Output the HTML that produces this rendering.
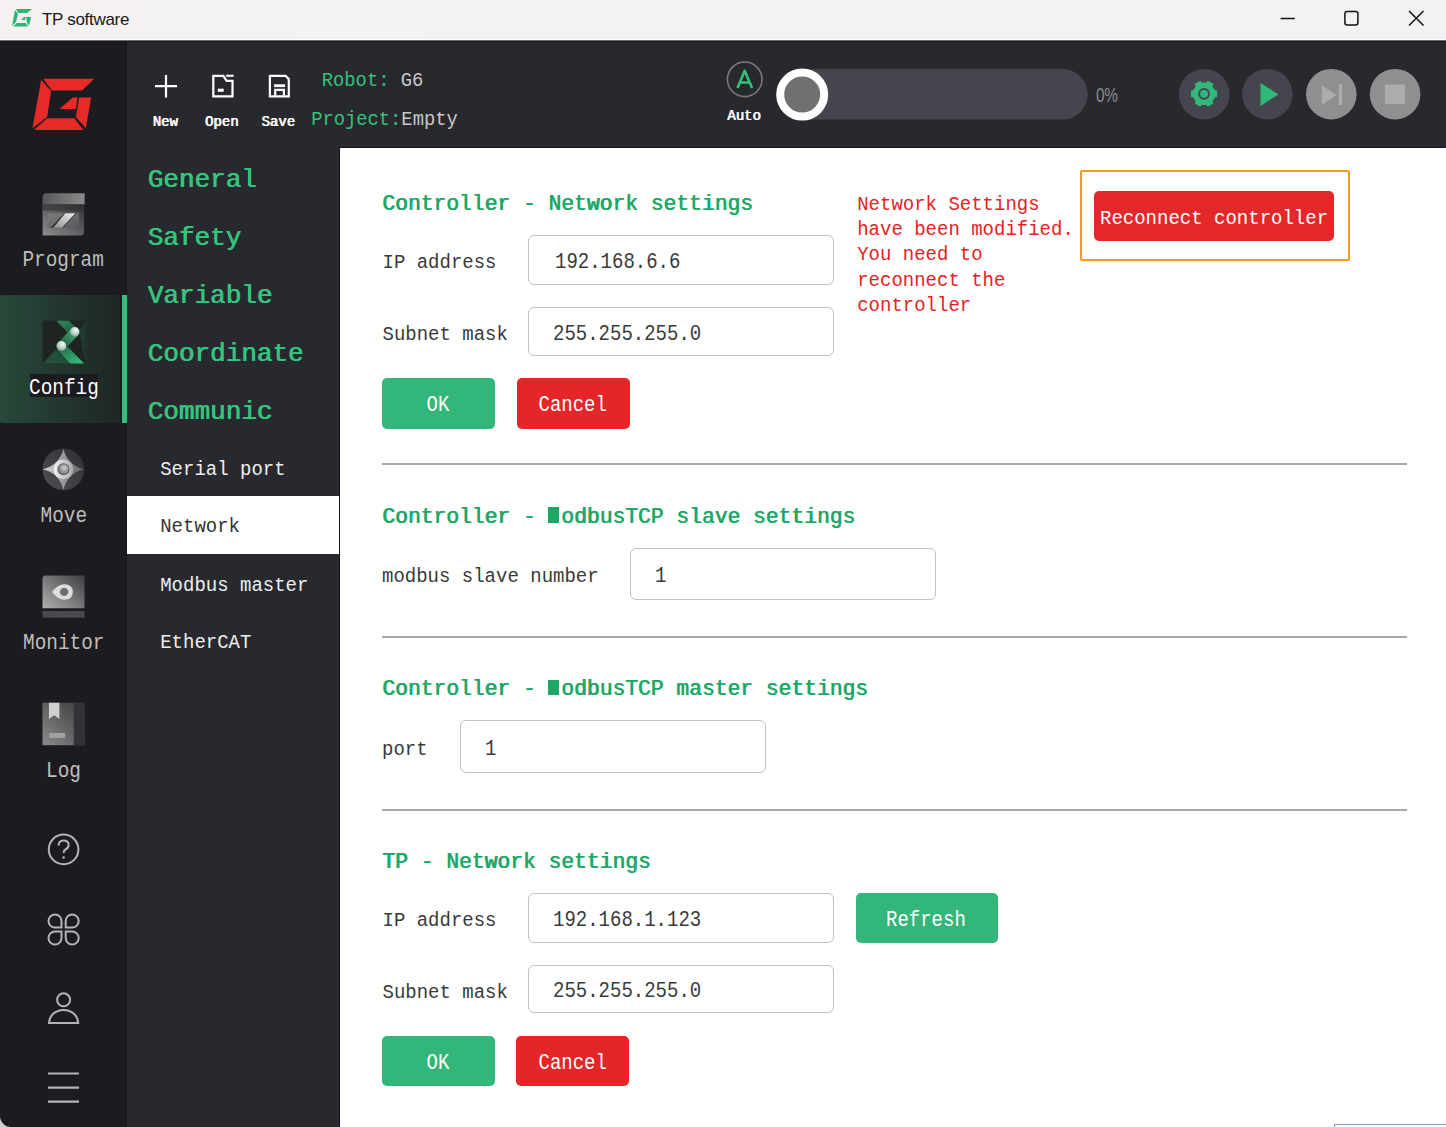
<!DOCTYPE html><html><head><meta charset="utf-8"><title>TP software</title><style>
html,body{margin:0;padding:0;}
body{width:1446px;height:1127px;overflow:hidden;position:relative;background:#fff;}
.t{position:absolute;white-space:pre;line-height:1;font-family:"Liberation Mono",monospace;transform-origin:0 76.6%;}
#titlebar{position:absolute;left:0;top:0;width:1446px;height:39px;background:linear-gradient(90deg,#f4f1f0,#f2f2f3 60%,#f2f2f4);border-bottom:1px solid #fff;}
#side{position:absolute;left:0;top:41px;width:127px;height:1086px;background:#1c1c20;border-bottom-left-radius:11px;}
#topbar{position:absolute;left:127px;top:41px;width:1319px;height:107px;background:#28292e;}
#menu{position:absolute;left:127px;top:148px;width:213px;height:979px;background:#28292e;}
#content{position:absolute;left:340px;top:148px;width:1106px;height:979px;background:#fff;box-shadow:-1px -1px 0 #111;}
#cfgbg{position:absolute;left:0;top:295.3px;width:120px;height:127.4px;background:linear-gradient(90deg,#27493a,#1e2623);border-radius:2px 0 0 2px;}
#cfgbar{position:absolute;left:122px;top:295.3px;width:5px;height:127.4px;background:#35bd7c;}
.inp{position:absolute;box-sizing:border-box;border:1.7px solid #c2c2c2;border-radius:6px;background:#fff;}
.btn{position:absolute;border-radius:5px;}
.hr{position:absolute;left:382px;width:1024.5px;height:2px;background:#a9a9a9;}
.blk{display:inline-block;width:10.5px;height:0.72em;background:currentColor;margin-left:0px;margin-right:2.3px;vertical-align:baseline;}
</style></head><body>
<div id="titlebar"></div><div style="position:absolute;left:0;top:40px;width:1446px;height:1px;background:#6e6e72"></div>
<svg style="position:absolute;left:12px;top:9px" width="22" height="18" viewBox="0 0 22 18"><path fill="#2fb573" d="M4 0 L20 0 L15 4 L6 4 Z M3 1 L6 5 L4 13 L0 17 Z M1 17.5 L5 14 L14 14 L16 17.5 Z M14 8 L19 8 L17 17 L15 13.5 Z M12 8 L13.5 8 L13 11 L9 11 Z"/></svg>
<div style="position:absolute;left:42px;font-family:'Liberation Sans',sans-serif;font-size:17px;color:#1a1a1a;top:9.5px;letter-spacing:-0.3px">TP software</div>
<svg style="position:absolute;left:1270px;top:8px" width="170" height="22" viewBox="0 0 170 22"><path d="M10.6 10.5 H24.8" stroke="#111" stroke-width="1.5"/><rect x="74.9" y="3.5" width="13" height="13.5" rx="2.2" fill="none" stroke="#111" stroke-width="1.5"/><path d="M139 3 L153.5 17.5 M153.5 3 L139 17.5" stroke="#111" stroke-width="1.45"/></svg>
<div style="position:absolute;left:0;top:1110px;width:20px;height:17px;background:#cfcfcf"></div><div id="side"></div>
<svg style="position:absolute;left:0;top:41px" width="127" height="107" viewBox="0 41 127 107"><g fill="#e52a27"><polygon points="43.2,78.8 94.3,78.8 81.9,90.4 52,90.4"/><polygon points="41.2,80 51.1,91.1 47.2,117.1 32.4,128.3"/><polygon points="34,129.9 47.2,118.3 74.3,118.3 83.5,129.9"/><polygon points="79.1,97.5 91.1,97.5 85.9,128.3 75.9,117.1"/><polygon points="72.7,97.5 77.5,97.5 75.9,109.1 59.5,109.1"/></g></svg>
<div style="position:absolute;left:126px;top:41px;width:1px;height:1086px;background:#151518"></div><div style="position:absolute;left:127px;top:148px;width:1px;height:979px;background:#2d2e33"></div>
<div id="cfgbg"></div><div id="cfgbar"></div>
<svg style="position:absolute;left:0;top:148px" width="127" height="979" viewBox="0 148 127 979">
<defs>
<linearGradient id="gp" x1="1" y1="0" x2="0" y2="1"><stop offset="0" stop-color="#303034"/><stop offset="1" stop-color="#8e8e8e"/></linearGradient>
<linearGradient id="gp2" x1="0" y1="0" x2="1" y2="0"><stop offset="0" stop-color="#58585c"/><stop offset="1" stop-color="#8a8a8a"/></linearGradient>
<linearGradient id="gm" x1="0" y1="1" x2="1" y2="0"><stop offset="0" stop-color="#b0b0b0"/><stop offset="1" stop-color="#3e3e42"/></linearGradient>
<linearGradient id="gl" x1="0" y1="1" x2="1" y2="0"><stop offset="0" stop-color="#8a8a8a"/><stop offset="1" stop-color="#3a3a3e"/></linearGradient>
<linearGradient id="gmv" x1="0" y1="0.5" x2="1" y2="0.5"><stop offset="0" stop-color="#d8d8d8"/><stop offset="0.5" stop-color="#9a9a9a"/><stop offset="1" stop-color="#606064"/></linearGradient>
<linearGradient id="gmc" x1="0" y1="1" x2="1" y2="0"><stop offset="0" stop-color="#505054"/><stop offset="1" stop-color="#2e2e32"/></linearGradient>
<linearGradient id="gmr" x1="0" y1="0.5" x2="1" y2="0.5"><stop offset="0" stop-color="#f4f4f4"/><stop offset="1" stop-color="#a8a8a8"/></linearGradient>
<radialGradient id="gmb" cx="0.6" cy="0.35" r="0.7"><stop offset="0" stop-color="#d0d0d0"/><stop offset="1" stop-color="#707072"/></radialGradient>
<linearGradient id="gc1" x1="0" y1="0" x2="1" y2="1"><stop offset="0" stop-color="#2e8a5c"/><stop offset="1" stop-color="#24573f"/></linearGradient>
<linearGradient id="gc2" x1="0" y1="0" x2="1" y2="1"><stop offset="0" stop-color="#245a40"/><stop offset="1" stop-color="#36c885"/></linearGradient>
<linearGradient id="gc3" gradientUnits="userSpaceOnUse" x1="61" y1="346" x2="75" y2="332"><stop offset="0" stop-color="#24573f"/><stop offset="1" stop-color="#3aa874"/></linearGradient>
<radialGradient id="gball" cx="0.62" cy="0.3" r="0.85"><stop offset="0" stop-color="#f6fffa"/><stop offset="0.55" stop-color="#b4cbbf"/><stop offset="1" stop-color="#56806a"/></radialGradient>
<linearGradient id="gpi" x1="0" y1="0" x2="1" y2="1"><stop offset="0" stop-color="#7c7c7e"/><stop offset="1" stop-color="#58585c"/></linearGradient>
<linearGradient id="gps" x1="1" y1="0" x2="0" y2="1"><stop offset="0" stop-color="#f0f0f0"/><stop offset="1" stop-color="#909090"/></linearGradient>
</defs>
<!-- Program -->
<path d="M46.6 193.3 H84.6 V204.6 H42.6 V197.3 Q42.6 193.3 46.6 193.3Z" fill="url(#gp2)"/>
<path d="M42.6 204.6 H84.1 V231.5 Q84.1 235.5 80.1 235.5 H42.6Z" fill="url(#gp)"/>
<rect x="42.6" y="204.6" width="41.5" height="6" fill="#2e2e32" opacity="0.55"/>
<rect x="47.7" y="213.2" width="31.4" height="14.5" fill="url(#gpi)"/>
<polygon points="64.2,213.2 76.4,213.2 63,227.7 50.8,227.7" fill="#2a2a2e"/>
<polygon points="65.2,213.2 75.4,213.2 62,227.7 53.2,227.7" fill="url(#gps)"/>
<!-- Config -->
<rect x="42.6" y="320.6" width="42.5" height="42.9" fill="#1e2422"/>
<polygon points="85.1,321 85.1,362 79,331" fill="#213a30"/>
<polygon points="42.6,363.5 55.5,350.1 70.3,363.5" fill="#23503b"/>
<polygon points="56.5,320.8 68.9,320.8 79,330.5 67.5,332.5" fill="url(#gc1)"/>
<polygon points="57,350 66,345 84.1,363.5 70.3,363.5" fill="url(#gc2)"/>
<line x1="74.7" y1="331.9" x2="61.3" y2="346" stroke="url(#gc3)" stroke-width="9.4"/>
<circle cx="74.7" cy="331.9" r="4.8" fill="url(#gball)"/>
<circle cx="61.3" cy="346" r="4.9" fill="url(#gball)"/>
<!-- Move -->
<circle cx="63.4" cy="469.3" r="20.8" fill="url(#gmc)"/>
<path d="M63.4 449 Q67.5 465 83.9 469.3 Q67.5 473.5 63.4 489.8 Q59.3 473.5 42.9 469.3 Q59.3 465 63.4 449Z" fill="url(#gmv)"/>
<circle cx="63.4" cy="469.3" r="9.8" fill="url(#gmr)"/>
<circle cx="63.4" cy="469.3" r="6" fill="#5c5c5e"/>
<circle cx="63.4" cy="469.3" r="5" fill="url(#gmb)"/>
<!-- Monitor -->
<path d="M45.5 575.5 H84.5 V608.3 H42.5 V578.5 Q42.5 575.5 45.5 575.5Z" fill="url(#gm)"/>
<rect x="42.5" y="611" width="42" height="6.7" fill="#4a4a4e"/>
<path d="M51.9 592 Q58 584.2 64.1 584.2 Q72.8 584.2 72.8 592 Q72.8 599.8 64.1 599.8 Q58 599.8 51.9 592Z" fill="#dcdcdc"/>
<circle cx="64.1" cy="591.9" r="4.2" fill="#707072"/>
<!-- Log -->
<rect x="42.5" y="702.7" width="42" height="42.5" fill="url(#gl)"/>
<rect x="73.8" y="702.7" width="10.7" height="42.5" fill="#333337"/>
<polygon points="48.9,702.7 59.4,702.7 59.4,718.9 54.1,715.3 48.9,718.9" fill="#d0d0d0"/>
<rect x="49.2" y="733" width="16" height="5" fill="#a0a0a0"/>
<!-- help -->
<circle cx="63.6" cy="849.4" r="14.8" fill="none" stroke="#b4b4b4" stroke-width="2"/>
<path d="M58.6 845.5 Q58.6 840.5 63.6 840.5 Q68.6 840.5 68.6 845 Q68.6 848 65.5 849.5 Q63.6 850.5 63.6 853" fill="none" stroke="#b4b4b4" stroke-width="2"/>
<circle cx="63.6" cy="857.5" r="1.3" fill="#b4b4b4"/>
<!-- clover -->
<g fill="none" stroke="#b4b4b4" stroke-width="2">
<path d="M61.5 927.5 H55 A6.5 6.5 0 1 1 61.5 921 Z"/>
<path d="M65.7 927.5 H72.2 A6.5 6.5 0 1 0 65.7 921 Z"/>
<path d="M61.5 931.5 H55 A6.5 6.5 0 1 0 61.5 938 Z"/>
<path d="M65.7 931.5 H72.2 A6.5 6.5 0 1 1 65.7 938 Z"/>
</g>
<!-- user -->
<circle cx="63.6" cy="999.8" r="6.5" fill="none" stroke="#b4b4b4" stroke-width="2"/>
<path d="M49 1023 A14.6 13 0 0 1 78.2 1023 Z" fill="none" stroke="#b4b4b4" stroke-width="2"/>
<!-- menu -->
<path d="M48 1073.5 H79 M48 1087.6 H79 M48 1101.6 H79" stroke="#b4b4b4" stroke-width="2.2"/>
</svg>
<div class="t" style="left:22.4px;top:252.44px;font-size:19.4px;color:#bfbfbf;font-weight:normal;transform:scaleY(1.1);">Program</div>

<div style="position:absolute;left:29.6px;top:374.4px;width:68px;height:22.6px;background:#1c1c20"></div>
<div class="t" style="left:29px;top:379.64px;font-size:19.4px;color:#ffffff;font-weight:normal;transform:scaleY(1.1);">Config</div>

<div class="t" style="left:40.5px;top:507.64px;font-size:19.4px;color:#bfbfbf;font-weight:normal;transform:scaleY(1.1);">Move</div>

<div class="t" style="left:23px;top:635.14px;font-size:19.4px;color:#bfbfbf;font-weight:normal;transform:scaleY(1.1);">Monitor</div>

<div class="t" style="left:46px;top:762.94px;font-size:19.4px;color:#bfbfbf;font-weight:normal;transform:scaleY(1.1);">Log</div>

<div id="topbar"></div><div style="position:absolute;left:0;top:41px;width:1446px;height:1px;background:#18181e"></div>
<svg style="position:absolute;left:140px;top:60px" width="170" height="50" viewBox="140 60 170 50">
<path d="M166 75 V97.5 M155 86.2 H177" stroke="#fff" stroke-width="2.2"/>
<path d="M213.3 96.3 V75.8 H223.4 L226.6 80.9 H232.5 V96.3 Z" fill="none" stroke="#fff" stroke-width="2.2" stroke-linejoin="miter"/>
<rect x="226.2" y="74.7" width="7.4" height="2.1" fill="#fff"/>
<rect x="217.8" y="88.7" width="5.9" height="3.1" fill="#fff"/>
<path d="M269.9 96.3 V75.8 H285.6 L288.8 79.2 V96.3 Z" fill="none" stroke="#fff" stroke-width="2.2"/>
<rect x="274.1" y="84.3" width="10.9" height="2.8" fill="#fff"/>
<path d="M275.2 95.5 V89.8 H283.9 V95.5" fill="none" stroke="#fff" stroke-width="2.2"/>
</svg>
<div class="t" style="left:152.4px;top:114.58px;font-size:14px;color:#ffffff;font-weight:normal;transform:scaleY(1.05);text-shadow:0.8px 0 0 currentColor;">New</div>

<div class="t" style="left:204.7px;top:114.58px;font-size:14px;color:#ffffff;font-weight:normal;transform:scaleY(1.05);text-shadow:0.8px 0 0 currentColor;">Open</div>

<div class="t" style="left:261.2px;top:114.58px;font-size:14px;color:#ffffff;font-weight:normal;transform:scaleY(1.05);text-shadow:0.8px 0 0 currentColor;">Save</div>

<div class="t" style="left:727px;top:108.98px;font-size:14px;color:#ffffff;font-weight:normal;transform:scaleY(1.05);text-shadow:0.8px 0 0 currentColor;">Auto</div>

<div class="t" style="left:321.8px;top:71.50px;font-size:18.8px;color:#32c47c;font-weight:normal;transform:scaleY(1.1);">Robot: <span style="color:#c8c8c8">G6</span></div>

<div class="t" style="left:311.2px;top:110.90px;font-size:18.8px;color:#32c47c;font-weight:normal;transform:scaleY(1.1);">Project:<span style="color:#c8c8c8">Empty</span></div>

<svg style="position:absolute;left:700px;top:41px" width="746" height="107" viewBox="700 41 746 107">
<circle cx="744.7" cy="79.3" r="17.3" fill="none" stroke="#7a7a7a" stroke-width="1.6"/>
<path d="M737.5 88 L744.7 70.8 L752 88 M740 82.5 H749.5" fill="none" stroke="#30c27a" stroke-width="2.6" stroke-linejoin="round"/>
<rect x="780" y="69" width="307.7" height="50.6" rx="25.3" fill="#45454e"/>
<circle cx="802.2" cy="94.6" r="22" fill="#707070" stroke="#ffffff" stroke-width="8"/>
<circle cx="1204.2" cy="94.2" r="25.3" fill="#45454e"/>
<circle cx="1267.4" cy="94.2" r="25.3" fill="#45454e"/>
<circle cx="1331.3" cy="94.2" r="25.3" fill="#8f8f8f"/>
<circle cx="1395.1" cy="94.2" r="25.3" fill="#8f8f8f"/>
<polygon points="1260.5,82.9 1278.4,94.4 1260.5,106" fill="#32b87a"/>
<polygon points="1321.9,85.5 1336.8,95 1321.9,104.7" fill="#acacac"/>
<rect x="1338.8" y="84.2" width="3.2" height="20.8" fill="#acacac"/>
<rect x="1384.8" y="84.5" width="20.2" height="19.5" fill="#acacac"/>
<g transform="translate(1204.1,93.8)" fill="#32b87a">
<rect x="8" y="-3.6" width="5.1" height="7.2" rx="1.3" transform="rotate(0)"/><rect x="8" y="-3.6" width="5.1" height="7.2" rx="1.3" transform="rotate(60)"/><rect x="8" y="-3.6" width="5.1" height="7.2" rx="1.3" transform="rotate(120)"/><rect x="8" y="-3.6" width="5.1" height="7.2" rx="1.3" transform="rotate(180)"/><rect x="8" y="-3.6" width="5.1" height="7.2" rx="1.3" transform="rotate(240)"/><rect x="8" y="-3.6" width="5.1" height="7.2" rx="1.3" transform="rotate(300)"/>
<circle r="11.2"/>
<circle r="5.9" fill="#45454e"/>
<circle r="3.9"/>
</g>
</svg>
<div style="position:absolute;left:1096px;top:82.5px;font-family:'Liberation Sans',sans-serif;font-size:20.5px;color:#8a8a8a;transform:scaleX(0.75);transform-origin:0 0;letter-spacing:-0.5px">0%</div>
<div id="menu"></div>
<div class="t" style="left:147.4px;top:166.88px;font-size:26px;color:#35c47e;font-weight:normal;transform:scaleY(1.0);text-shadow:0.8px 0 0 currentColor;">General</div>

<div class="t" style="left:147.4px;top:224.88px;font-size:26px;color:#35c47e;font-weight:normal;transform:scaleY(1.0);text-shadow:0.8px 0 0 currentColor;">Safety</div>

<div class="t" style="left:147.4px;top:282.88px;font-size:26px;color:#35c47e;font-weight:normal;transform:scaleY(1.0);text-shadow:0.8px 0 0 currentColor;">Variable</div>

<div class="t" style="left:147.4px;top:340.88px;font-size:26px;color:#35c47e;font-weight:normal;transform:scaleY(1.0);text-shadow:0.8px 0 0 currentColor;">Coordinate</div>

<div class="t" style="left:147.4px;top:398.88px;font-size:26px;color:#35c47e;font-weight:normal;transform:scaleY(1.0);text-shadow:0.8px 0 0 currentColor;">Communic</div>

<div style="position:absolute;left:127px;top:496px;width:213px;height:58px;background:#fff"></div>
<div class="t" style="left:160.2px;top:460.55px;font-size:19px;color:#eeeeee;font-weight:normal;transform:scaleY(1.05);">Serial port</div>

<div class="t" style="left:160.2px;top:518.15px;font-size:19px;color:#333333;font-weight:normal;transform:scaleY(1.05);">Network</div>

<div class="t" style="left:160.2px;top:576.75px;font-size:19px;color:#eeeeee;font-weight:normal;transform:scaleY(1.05);">Modbus master</div>

<div class="t" style="left:160.2px;top:634.35px;font-size:19px;color:#eeeeee;font-weight:normal;transform:scaleY(1.05);">EtherCAT</div>

<div id="content"></div>
<div class="t" style="left:382.1px;top:194.48px;font-size:21.3px;color:#1ea866;font-weight:normal;transform:scaleY(1.0);text-shadow:0.8px 0 0 currentColor;">Controller - Network settings</div>

<div class="t" style="left:382.5px;top:253.95px;font-size:19px;color:#3a3a3a;font-weight:normal;transform:scaleY(1.05);">IP address</div>

<div class="inp" style="left:528.2px;top:235px;width:306px;height:50px"></div>
<div class="t" style="left:555px;top:253.95px;font-size:19px;color:#3a3a3a;font-weight:normal;transform:scaleY(1.2);">192.168.6.6</div>

<div class="t" style="left:382.5px;top:326.45px;font-size:19px;color:#3a3a3a;font-weight:normal;transform:scaleY(1.05);">Subnet mask</div>

<div class="inp" style="left:528.2px;top:307.4px;width:306px;height:48.5px"></div>
<div class="t" style="left:553px;top:325.60px;font-size:19px;color:#3a3a3a;font-weight:normal;transform:scaleY(1.2);">255.255.255.0</div>

<div class="btn" style="left:382px;top:377.5px;width:113px;height:51px;background:#33b679"></div>
<div class="t" style="left:426.5px;top:396.75px;font-size:19px;color:#fff;font-weight:normal;transform:scaleY(1.12);">OK</div>

<div class="btn" style="left:516.8px;top:377.5px;width:113px;height:51px;background:#e42628"></div>
<div class="t" style="left:538.5px;top:396.75px;font-size:19px;color:#fff;font-weight:normal;transform:scaleY(1.12);">Cancel</div>

<div class="t" style="left:857.2px;top:195.85px;font-size:19px;color:#e82222;font-weight:normal;transform:scaleY(1.05);">Network Settings</div>

<div class="t" style="left:857.2px;top:221.15px;font-size:19px;color:#e82222;font-weight:normal;transform:scaleY(1.05);">have been modified.</div>

<div class="t" style="left:857.2px;top:246.45px;font-size:19px;color:#e82222;font-weight:normal;transform:scaleY(1.05);">You need to</div>

<div class="t" style="left:857.2px;top:271.75px;font-size:19px;color:#e82222;font-weight:normal;transform:scaleY(1.05);">reconnect the</div>

<div class="t" style="left:857.2px;top:297.05px;font-size:19px;color:#e82222;font-weight:normal;transform:scaleY(1.05);">controller</div>

<div style="position:absolute;left:1079.5px;top:169.5px;width:266px;height:87px;border:2.5px solid #f39a1f;border-radius:2px"></div>
<div class="btn" style="left:1093.7px;top:190.5px;width:240.6px;height:50.7px;background:#e4282a"></div>
<div class="t" style="left:1100px;top:210.05px;font-size:19px;color:#fff;font-weight:normal;transform:scaleY(1.05);">Reconnect controller</div>

<div class="hr" style="top:463.3px"></div>
<div class="t" style="left:382.1px;top:506.78px;font-size:21.3px;color:#1ea866;font-weight:normal;transform:scaleY(1.0);text-shadow:0.8px 0 0 currentColor;">Controller - <span class="blk"></span>odbusTCP slave settings</div>

<div class="t" style="left:382px;top:568.15px;font-size:19px;color:#3a3a3a;font-weight:normal;transform:scaleY(1.05);">modbus slave number</div>

<div class="inp" style="left:630.3px;top:547.8px;width:306px;height:52.5px"></div>
<div class="t" style="left:655px;top:568.00px;font-size:19px;color:#3a3a3a;font-weight:normal;transform:scaleY(1.2);">1</div>

<div class="hr" style="top:636px"></div>
<div class="t" style="left:382.1px;top:679.38px;font-size:21.3px;color:#1ea866;font-weight:normal;transform:scaleY(1.0);text-shadow:0.8px 0 0 currentColor;">Controller - <span class="blk"></span>odbusTCP master settings</div>

<div class="t" style="left:382px;top:741.15px;font-size:19px;color:#3a3a3a;font-weight:normal;transform:scaleY(1.05);">port</div>

<div class="inp" style="left:460.1px;top:720.4px;width:306.3px;height:52.6px"></div>
<div class="t" style="left:485px;top:740.65px;font-size:19px;color:#3a3a3a;font-weight:normal;transform:scaleY(1.2);">1</div>

<div class="hr" style="top:808.6px"></div>
<div class="t" style="left:382.1px;top:852.48px;font-size:21.3px;color:#1ea866;font-weight:normal;transform:scaleY(1.0);text-shadow:0.8px 0 0 currentColor;">TP - Network settings</div>

<div class="t" style="left:382.5px;top:911.95px;font-size:19px;color:#3a3a3a;font-weight:normal;transform:scaleY(1.05);">IP address</div>

<div class="inp" style="left:528px;top:893.1px;width:306px;height:49.6px"></div>
<div class="t" style="left:553px;top:911.85px;font-size:19px;color:#3a3a3a;font-weight:normal;transform:scaleY(1.2);">192.168.1.123</div>

<div class="btn" style="left:856px;top:893px;width:141.7px;height:49.7px;background:#33b679"></div>
<div class="t" style="left:886px;top:912.25px;font-size:19px;color:#fff;font-weight:normal;transform:scaleY(1.12);">Refresh</div>

<div class="t" style="left:382.5px;top:983.95px;font-size:19px;color:#3a3a3a;font-weight:normal;transform:scaleY(1.05);">Subnet mask</div>

<div class="inp" style="left:528px;top:964.8px;width:306px;height:48.7px"></div>
<div class="t" style="left:553px;top:983.10px;font-size:19px;color:#3a3a3a;font-weight:normal;transform:scaleY(1.2);">255.255.255.0</div>

<div class="btn" style="left:382px;top:1035.7px;width:113.3px;height:50px;background:#33b679"></div>
<div class="t" style="left:426.5px;top:1054.95px;font-size:19px;color:#fff;font-weight:normal;transform:scaleY(1.12);">OK</div>

<div class="btn" style="left:516px;top:1035.7px;width:113px;height:50px;background:#e42628"></div>
<div class="t" style="left:538.5px;top:1054.95px;font-size:19px;color:#fff;font-weight:normal;transform:scaleY(1.12);">Cancel</div>

<div style="position:absolute;left:1334px;top:1124.3px;width:120px;height:10px;border:1.8px solid #7a9fd0"></div>
</body></html>
